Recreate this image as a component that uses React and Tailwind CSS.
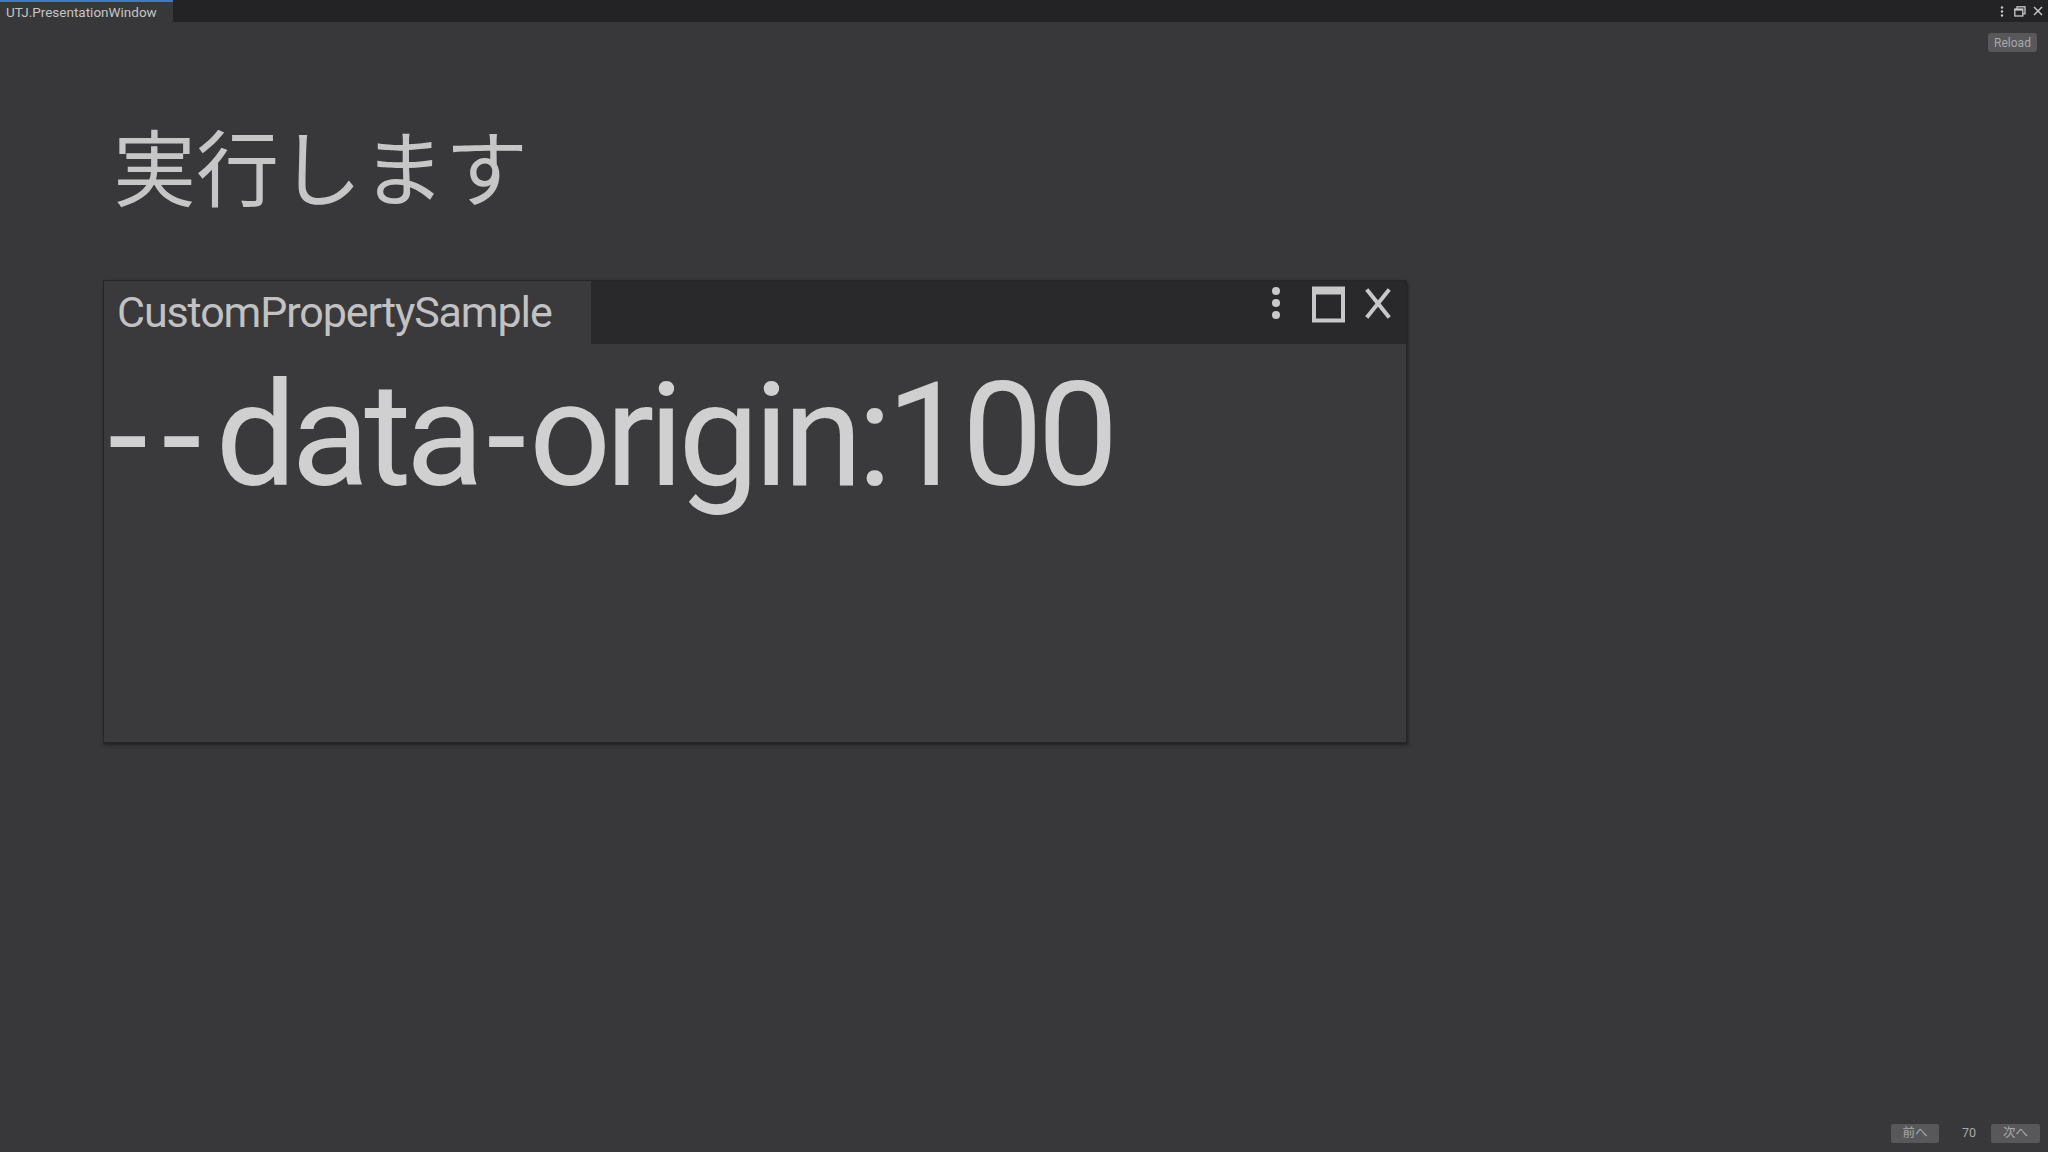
export default function App() {
  return (
    <div
      className="w-[2048px] h-[1152px] bg-[#38373a] flex flex-col overflow-hidden"
      style={{ fontFamily: 'Roboto, "Noto Sans CJK JP", sans-serif' }}
    >
      {/* editor tab bar */}
      <div className="h-[22px] bg-[#232225] flex items-stretch">
        <div className="w-[173px] bg-[#38373a] border-t-2 border-[#3f7bc4] flex items-center pl-[6px] text-[13.5px] text-[#c4c4c4]">
          UTJ.PresentationWindow
        </div>
        <div className="flex-1" />
        <div className="flex items-center pr-[5px] text-[#c8c8c8]">
          <svg width="4" height="11" viewBox="0 0 4 11" className="mr-[10px]">
            <circle cx="2" cy="1.5" r="1.2" fill="currentColor" />
            <circle cx="2" cy="5.5" r="1.2" fill="currentColor" />
            <circle cx="2" cy="9.5" r="1.2" fill="currentColor" />
          </svg>
          <svg width="12" height="11" viewBox="0 0 12 11" fill="none" stroke="currentColor" strokeWidth="1.3" className="mr-[7px]">
            <rect x="3" y="0.8" width="8" height="7" />
            <rect x="0.8" y="3" width="8" height="7" fill="#232225" />
            <line x1="0.8" y1="3.8" x2="8.8" y2="3.8" strokeWidth="1.6" />
          </svg>
          <svg width="10" height="10" viewBox="0 0 10 10" stroke="currentColor" strokeWidth="1.5">
            <line x1="1" y1="1" x2="9" y2="9" />
            <line x1="9" y1="1" x2="1" y2="9" />
          </svg>
        </div>
      </div>

      {/* slide area */}
      <div className="flex-1 flex flex-col">
        <div className="flex justify-end pt-[11px] pr-[11px]">
          <button className="h-[19px] w-[49px] rounded-[3px] bg-[#58575a] text-[12px] text-[#a8a8a8] leading-none">
            Reload
          </button>
        </div>

        <h1
          className="mt-[71px] pl-[113px] text-[83px] leading-none text-[#c6c6c6] font-normal"
          style={{ fontFamily: '"Noto Sans CJK JP", sans-serif' }}
        >
          実行します
        </h1>

        {/* embedded editor window */}
        <div className="mt-[74px] ml-[103px] w-[1304px] h-[463px] bg-[#3a393c] border border-[#262528] shadow-[1px_2px_3px_rgba(0,0,0,0.45)] flex flex-col">
          <div className="h-[63px] bg-[#29282b] flex items-stretch">
            <div className="w-[487px] bg-[#3a393c] flex items-center pl-[13px] text-[43px] tracking-[-1.1px] text-[#c2c2c2]">
              CustomPropertySample
            </div>
            <div className="flex-1" />
            <div className="flex items-start pt-[5px] pr-[15px] text-[#c8c8c8]">
              <svg width="10" height="36" viewBox="0 0 10 36" className="mr-[31px]">
                <circle cx="5" cy="5" r="4" fill="currentColor" />
                <circle cx="5" cy="17" r="4" fill="currentColor" />
                <circle cx="5" cy="29" r="4" fill="currentColor" />
              </svg>
              <svg width="33" height="37" viewBox="0 0 33 37" fill="none" stroke="currentColor" className="mr-[20px]">
                <rect x="2" y="2.5" width="29" height="32" strokeWidth="4" />
                <line x1="2" y1="6" x2="31" y2="6" strokeWidth="5" />
              </svg>
              <svg width="26" height="31" viewBox="0 0 26 31" stroke="currentColor" strokeWidth="4" strokeLinecap="square" className="mt-[2px]">
                <line x1="3" y1="3" x2="23" y2="28" />
                <line x1="23" y1="3" x2="3" y2="28" />
              </svg>
            </div>
          </div>
          <div className="pl-[4px] pt-[20px] text-[144px] leading-none tracking-[-5.5px] text-[#d0d0d0]">
            <span className="tracking-[14px]">--</span>data<span className="px-[8px]">-</span>origin:100
          </div>
        </div>

        <div className="flex-1" />

        {/* page navigation */}
        <div className="flex justify-end items-center pb-[9px] pr-[8px] text-[12.5px] text-[#a8a8a8]">
          <button className="h-[19px] w-[48px] rounded-[2px] bg-[#58575a] leading-none">前へ</button>
          <span className="w-[52px] pl-[8px] text-center">70</span>
          <button className="h-[19px] w-[49px] rounded-[2px] bg-[#58575a] leading-none">次へ</button>
        </div>
      </div>
    </div>
  );
}
